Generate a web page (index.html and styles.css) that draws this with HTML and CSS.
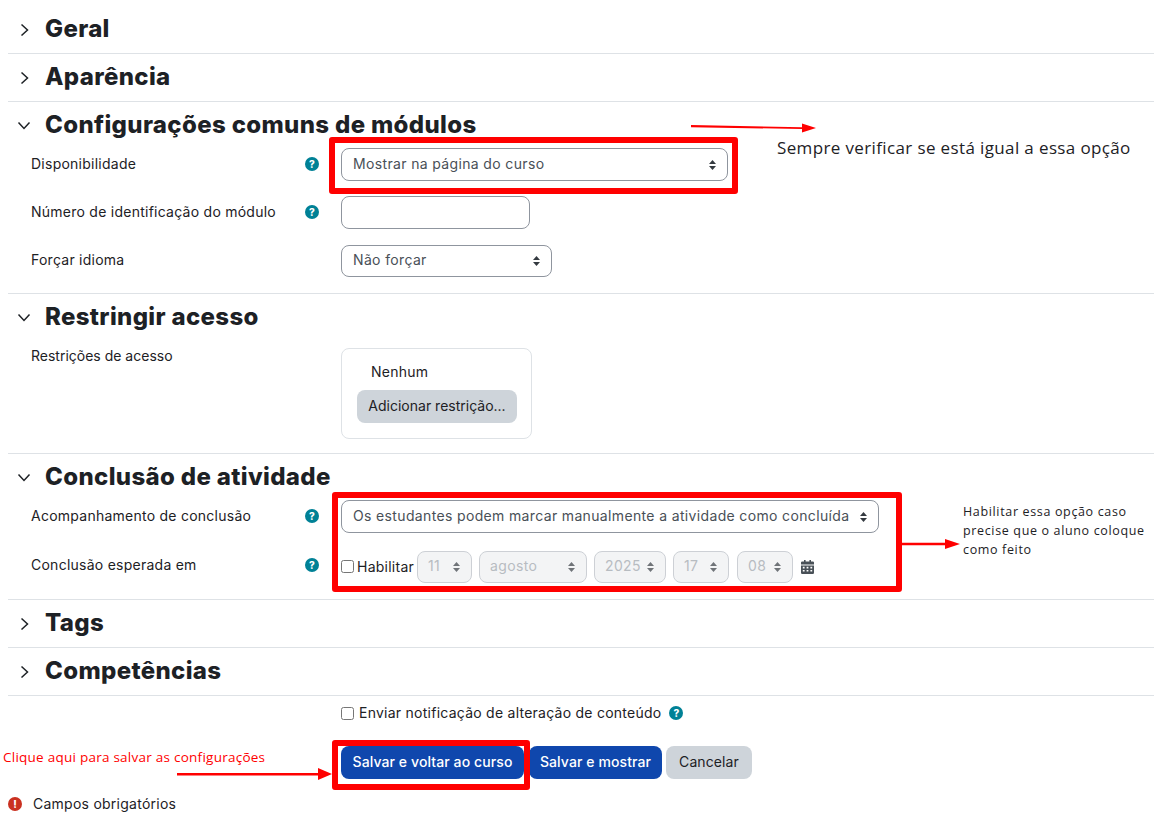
FILE: index.html
```html
<!DOCTYPE html>
<html lang="pt-BR">
<head>
  <meta charset="UTF-8" />
  <title>Configurações do módulo</title>
  <link rel="stylesheet" href="styles.css">
</head>
<body>

  <div class="page">

    <section class="section collapsed">
      <div class="section-header">
        <span class="toggle"><svg width="9" height="14" viewBox="0 0 9 14"><path d="M1.5 1.5 7.5 7 1.5 12.5" /></svg></span>
        <h3>Geral</h3>
      </div>
    </section>

    <section class="section collapsed">
      <div class="section-header">
        <span class="toggle"><svg width="9" height="14" viewBox="0 0 9 14"><path d="M1.5 1.5 7.5 7 1.5 12.5" /></svg></span>
        <h3>Aparência</h3>
      </div>
    </section>

    <section class="section section-modules">
      <div class="section-header">
        <span class="toggle"><svg class="down" width="14" height="9" viewBox="0 0 14 9"><path d="M1.5 1.5 7 7.5 12.5 1.5" /></svg></span>
        <h3>Configurações comuns de módulos</h3>
      </div>
      <div class="row">
        <label>Disponibilidade</label>
        <span class="help">?</span>
        <select class="field w-387"><option>Mostrar na página do curso</option></select>
      </div>
      <div class="row">
        <label>Número de identificação do módulo</label>
        <span class="help">?</span>
        <input type="text" class="field w-189">
      </div>
      <div class="row row-last">
        <label>Forçar idioma</label>
        <span></span>
        <select class="field w-211"><option>Não forçar</option></select>
      </div>
    </section>

    <section class="section section-access">
      <div class="section-header">
        <span class="toggle"><svg class="down" width="14" height="9" viewBox="0 0 14 9"><path d="M1.5 1.5 7 7.5 12.5 1.5" /></svg></span>
        <h3>Restringir acesso</h3>
      </div>
      <div class="row row-access">
        <label>Restrições de acesso</label>
        <span></span>
        <div class="access-box">
          <div class="access-none">Nenhum</div>
          <button class="btn btn-secondary btn-access">Adicionar restrição...</button>
        </div>
      </div>
    </section>

    <section class="section section-completion">
      <div class="section-header">
        <span class="toggle"><svg class="down" width="14" height="9" viewBox="0 0 14 9"><path d="M1.5 1.5 7 7.5 12.5 1.5" /></svg></span>
        <h3>Conclusão de atividade</h3>
      </div>
      <div class="row">
        <label>Acompanhamento de conclusão</label>
        <span class="help">?</span>
        <select class="field w-538"><option>Os estudantes podem marcar manualmente a atividade como concluída</option></select>
      </div>
      <div class="row row-last">
        <label>Conclusão esperada em</label>
        <span class="help">?</span>
        <div class="date-group">
          <input type="checkbox" class="check">
          <span class="enable">Habilitar</span>
          <select class="field date w-55" disabled><option>11</option></select>
          <select class="field date w-108" disabled><option>agosto</option></select>
          <select class="field date w-72" disabled><option>2025</option></select>
          <select class="field date w-56" disabled><option>17</option></select>
          <select class="field date w-56" disabled><option>08</option></select>
          <svg class="calendar" width="13" height="14" viewBox="0 0 13 14">
            <path d="M3 0h1.6v2H3zM8.4 0H10v2H8.4z" />
            <path fill-rule="evenodd" d="M1.2 1.4h10.6a1.2 1.2 0 0 1 1.2 1.2V4.600H0V2.600a1.200 1.200 0 0 1 1.200-1.200zM0 5.400h13v7.400a1.200 1.200 0 0 1-1.200 1.200H1.200A1.200 1.200 0 0 1 0 12.800zM1.800 6.800v1.600h1.800V6.800zM5.600 6.800v1.600h1.800V6.800zM9.400 6.800v1.600h1.800V6.800zM1.800 10v1.600h1.800V10zM5.600 10v1.600h1.800V10zM9.400 10v1.600h1.800V10z" />
          </svg>
        </div>
      </div>
    </section>

    <section class="section collapsed">
      <div class="section-header">
        <span class="toggle"><svg width="9" height="14" viewBox="0 0 9 14"><path d="M1.500 1.500 7.500 7 1.500 12.500" /></svg></span>
        <h3>Tags</h3>
      </div>
    </section>

    <section class="section collapsed">
      <div class="section-header">
        <span class="toggle"><svg width="9" height="14" viewBox="0 0 9 14"><path d="M1.500 1.500 7.500 7 1.500 12.500" /></svg></span>
        <h3>Competências</h3>
      </div>
    </section>

    <div class="notify">
      <input type="checkbox" class="check">
      <span class="notify-text">Enviar notificação de alteração de conteúdo</span>
      <span class="help">?</span>
    </div>

    <div class="actions">
      <button class="btn btn-primary btn-save">Salvar e voltar ao curso</button>
      <button class="btn btn-primary btn-show">Salvar e mostrar</button>
      <button class="btn btn-secondary btn-cancel">Cancelar</button>
    </div>

    <div class="required">
      <span class="required-icon">!</span>
      <span>Campos obrigatórios</span>
    </div>

    <!-- Anotações por cima da tela -->
    <div class="mark mark-availability"></div>
    <div class="mark mark-completion"></div>
    <div class="mark mark-save"></div>

    <svg class="arrows" width="1154" height="817" viewBox="0 0 1154 817">
      <path d="M691 125 L802 127.200 L802 123.500 L816 128 L802 132.500 L802 129 L691 127.200Z" />
      <path d="M902 542.800H945V539L960 544L945 549V545.200H902Z" />
      <path d="M177 773H318V768L332 774L318 780V775.400H177Z" />
    </svg>

    <p class="note note-availability">Sempre verificar se está igual a essa opção</p>
    <p class="note note-completion">Habilitar essa opção caso<br>precise que o aluno coloque<br>como feito</p>
    <p class="note note-save">Clique aqui para salvar as configurações</p>

  </div>

</body>
</html>
```

FILE: styles.css
```css
:root {
  --text-color: #1d2125;
  --border-color: #dee2e6;
  --field-border: #8f959e;
  --primary: #0f47ad;
  --secondary: #ced4da;
  --info: #008196;
  --danger: #ca3120;
  --mark: #ff0000;
}

* {
  box-sizing: border-box;
}

body {
  margin: 0;
  background-color: #fff;
  color: var(--text-color);
  font-family: Inter, Arial, sans-serif;
  font-size: 14px;
  letter-spacing: 0.25px;
}

.page {
  position: relative;
  height: 817px;
  padding: 6px 0 0 8px;
  overflow: hidden;
}

.section {
  border-bottom: 1px solid var(--border-color);
}

.section-header {
  display: flex;
  align-items: center;
  height: 46px;
}

.collapsed .section-header {
  height: 47px;
}

.toggle {
  display: flex;
  justify-content: center;
  width: 33px;
  margin-right: 4px;
}

.toggle svg {
  fill: none;
  stroke: var(--text-color);
  stroke-width: 1.500;
}

.toggle svg.down {
  margin-left: -1px;
}

h3 {
  margin: 0;
  padding-bottom: 2px;
  font-size: 24px;
  font-weight: 800;
  letter-spacing: 0.35px;
}

.row {
  display: grid;
  grid-template-columns: 274px 36px 1fr;
  align-items: center;
  height: 33px;
  margin-bottom: 15px;
  padding-left: 23px;
}

.row label {
  padding-bottom: 2px;
}

.row-last {
  margin-bottom: 16px;
}

.section-modules .row-last {
  height: 32px;
  margin-top: 16px;
}

.section-modules .row-last label {
  padding-bottom: 3px;
}

.section-modules .row-last .field {
  height: 32px;
  padding-bottom: 3px;
}

.section-completion .row:first-of-type {
  margin-top: 1px;
}

.section-completion .row {
  margin-bottom: 17px;
}

.section-completion .row-last {
  margin-bottom: 16px;
}

.section-completion .row-last label {
  padding-bottom: 5px;
}

.section-completion .row-last .help {
  margin-top: -4px;
}

.row-access {
  align-items: start;
  height: auto;
  margin-top: 8px;
  margin-bottom: 14px;
}

.row-access label {
  padding: 0;
  line-height: 16px;
  letter-spacing: 0;
}

.help {
  display: flex;
  align-items: center;
  justify-content: center;
  width: 14px;
  height: 14px;
  margin-top: -1px;
  border-radius: 50%;
  background-color: var(--info);
  color: #fff;
  font-size: 10px;
  font-weight: 800;
  letter-spacing: 0;
}

.field {
  display: block;
  height: 33px;
  padding: 0 11px 2px;
  border: 1px solid var(--field-border);
  border-radius: 8px;
  background-color: #fff;
  color: #495057;
  font-family: inherit;
  font-size: 14px;
  letter-spacing: 0.35px;
}

select.field {
  appearance: none;
  background-image: url("data:image/svg+xml,%3Csvg xmlns='http://www.w3.org/2000/svg' width='7' height='10'%3E%3Cpath fill='%23343a40' d='M3.500 0 7 4H0zM3.500 10 0 6H7z'/%3E%3C/svg%3E");
  background-repeat: no-repeat;
  background-position: right 11px center;
}

.w-387 { width: 387px; }
.w-189 { width: 189px; }
.w-211 { width: 211px; }
.w-538 { width: 538px; }
.w-55 { width: 55px; }
.w-108 { width: 108px; }
.w-72 { width: 72px; }
.w-56 { width: 56px; }

.access-box {
  width: 191px;
  height: 91px;
  padding: 14px 14px 0 15px;
  border: 1px solid var(--border-color);
  border-radius: 8px;
}

.access-none {
  margin-left: 14px;
  margin-bottom: 10px;
  line-height: 17px;
}

.btn {
  height: 33px;
  padding: 0 0 2px;
  border: none;
  border-radius: 8px;
  font-family: inherit;
  font-size: 14px;
  letter-spacing: 0.1px;
}

.btn-primary {
  background-color: var(--primary);
  color: #fff;
  font-weight: 500;
}

.btn-secondary {
  background-color: var(--secondary);
  color: var(--text-color);
}

.btn-access {
  display: block;
  width: 160px;
  letter-spacing: 0;
}

.date-group {
  display: flex;
  align-items: center;
}

.date-group .date {
  height: 32px;
  margin-right: 7px;
  padding-left: 10px;
  border-color: #b8bdc4;
  background-color: #eef0f2;
  color: #9aa0a7;
}

.check {
  width: 13px;
  height: 13px;
  margin: 0;
}

.enable {
  width: 56px;
  margin: 0 4px 0 3px;
}

.date-group .w-72 {
  margin-right: 7px;
}

.date-group .date:nth-of-type(4) {
  margin-right: 8px;
}

.calendar {
  margin-left: 1px;
  fill: #495057;
}

.notify {
  display: flex;
  align-items: center;
  gap: 5px;
  height: 14px;
  margin: 10px 0 0 333px;
}

.notify-text {
  margin-top: -2px;
}

.notify .help {
  margin-left: 3px;
}

.actions {
  display: flex;
  margin: 26px 0 0 333px;
}

.btn-save {
  width: 183px;
  margin-right: 5px;
}

.btn-show {
  width: 133px;
  margin-right: 4px;
}

.btn-cancel {
  width: 86px;
}

.required {
  display: flex;
  align-items: center;
  gap: 11px;
  margin-top: 16px;
  height: 17px;
}

.required-icon {
  display: flex;
  align-items: center;
  justify-content: center;
  width: 14px;
  height: 14px;
  border-radius: 50%;
  background-color: var(--danger);
  color: #fff;
  font-size: 10px;
  font-weight: 800;
  letter-spacing: 0;
}

/* marcações vermelhas */
.mark {
  position: absolute;
  border: 6px solid var(--mark);
  border-radius: 3px;
}

.mark-availability {
  left: 329px;
  top: 137px;
  width: 409px;
  height: 57px;
}

.mark-completion {
  left: 332px;
  top: 492px;
  width: 570px;
  height: 100px;
}

.mark-save {
  left: 332px;
  top: 740px;
  width: 198px;
  height: 50px;
}

.arrows {
  position: absolute;
  left: 0;
  top: 0;
  fill: var(--mark);
}

.note {
  position: absolute;
  margin: 0;
  font-family: "Open Sans", Arial, sans-serif;
}

.note-availability {
  left: 777px;
  top: 136px;
  font-size: 17px;
  letter-spacing: 0.37px;
  line-height: 24px;
}

.note-completion {
  left: 963px;
  top: 502px;
  font-size: 12.500px;
  letter-spacing: 0.65px;
  line-height: 19px;
}

.note-save {
  left: 3px;
  top: 747px;
  color: var(--mark);
  font-size: 13.500px;
  letter-spacing: 0.25px;
  line-height: 20px;
}
```
